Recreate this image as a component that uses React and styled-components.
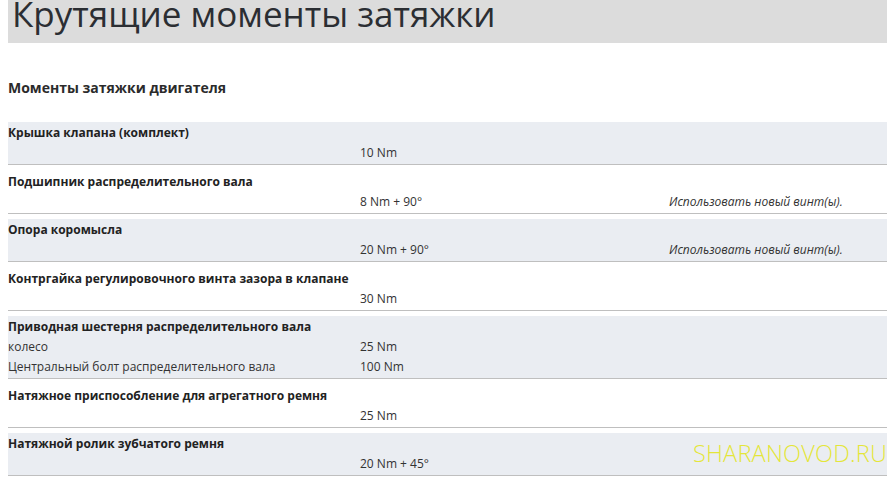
import React from "react";
import styled, { createGlobalStyle } from "styled-components";

const Global = createGlobalStyle`
  html, body { margin: 0; padding: 0; background: #fff; }
  body { margin: 0 8px; font-family: "Open Sans", "Noto Sans", sans-serif; color: #222; overflow: hidden; }
`;

const Page = styled.div`
  position: relative;
  display: flex;
  flex-direction: column;
`;

const Header = styled.header`
  height: 43px;
  background: #dcdcdc;
  overflow: hidden;
`;

const Title = styled.h1`
  margin: -4px 0 0 4px;
  font-size: 35px;
  line-height: 36px;
  font-weight: 400;
  color: #2b2e33;
  white-space: nowrap;
`;

const Section = styled.h2`
  margin: 35px 0 24px 0;
  font-size: 14px;
  line-height: 20px;
  font-weight: 700;
  color: #2b2b2b;
`;

const Row = styled.div`
  display: grid;
  grid-template-columns: 352px 309px 1fr;
  padding: 1px 0;
  margin-bottom: 5.5px;
  background: ${(p) => (p.$shaded ? "#eaedf2" : "#fff")};
  border-bottom: 1px solid #bfbfbf;
  font-size: 12px;
  line-height: 20px;
`;

const RowTitle = styled.div`
  grid-column: 1 / -1;
  font-weight: 700;
  color: #222;
`;

const Cell = styled.div`
  color: #333;
  font-style: ${(p) => (p.$note ? "italic" : "normal")};
  white-space: nowrap;
`;

const Watermark = styled.div`
  position: absolute;
  right: 0;
  top: 438px;
  font-family: "Open Sans", sans-serif;
  font-weight: 300;
  font-size: 23.5px;
  line-height: 30px;
  letter-spacing: 0.2px;
  color: #e4e63a;
  pointer-events: none;
`;

const rows = [
  { title: "Крышка клапана (комплект)", lines: [["", "10 Nm", ""]] },
  { title: "Подшипник распределительного вала", lines: [["", "8 Nm + 90°", "Использовать новый винт(ы)."]] },
  { title: "Опора коромысла", lines: [["", "20 Nm + 90°", "Использовать новый винт(ы)."]] },
  { title: "Контргайка регулировочного винта зазора в клапане", lines: [["", "30 Nm", ""]] },
  {
    title: "Приводная шестерня распределительного вала",
    lines: [
      ["колесо", "25 Nm", ""],
      ["Центральный болт распределительного вала", "100 Nm", ""],
    ],
  },
  { title: "Натяжное приспособление для агрегатного ремня", lines: [["", "25 Nm", ""]] },
  { title: "Натяжной ролик зубчатого ремня", lines: [["", "20 Nm + 45°", ""]] },
];

export default function App() {
  return (
    <>
      <Global />
      <Page>
        <Header>
          <Title>Крутящие моменты затяжки</Title>
        </Header>
        <Section>Моменты затяжки двигателя</Section>
        {rows.map((r, i) => (
          <Row key={i} $shaded={i % 2 === 0}>
            <RowTitle>{r.title}</RowTitle>
            {r.lines.map((l, j) => (
              <React.Fragment key={j}>
                <Cell>{l[0]}</Cell>
                <Cell>{l[1]}</Cell>
                <Cell $note>{l[2]}</Cell>
              </React.Fragment>
            ))}
          </Row>
        ))}
        <Watermark>SHARANOVOD.RU</Watermark>
      </Page>
    </>
  );
}
